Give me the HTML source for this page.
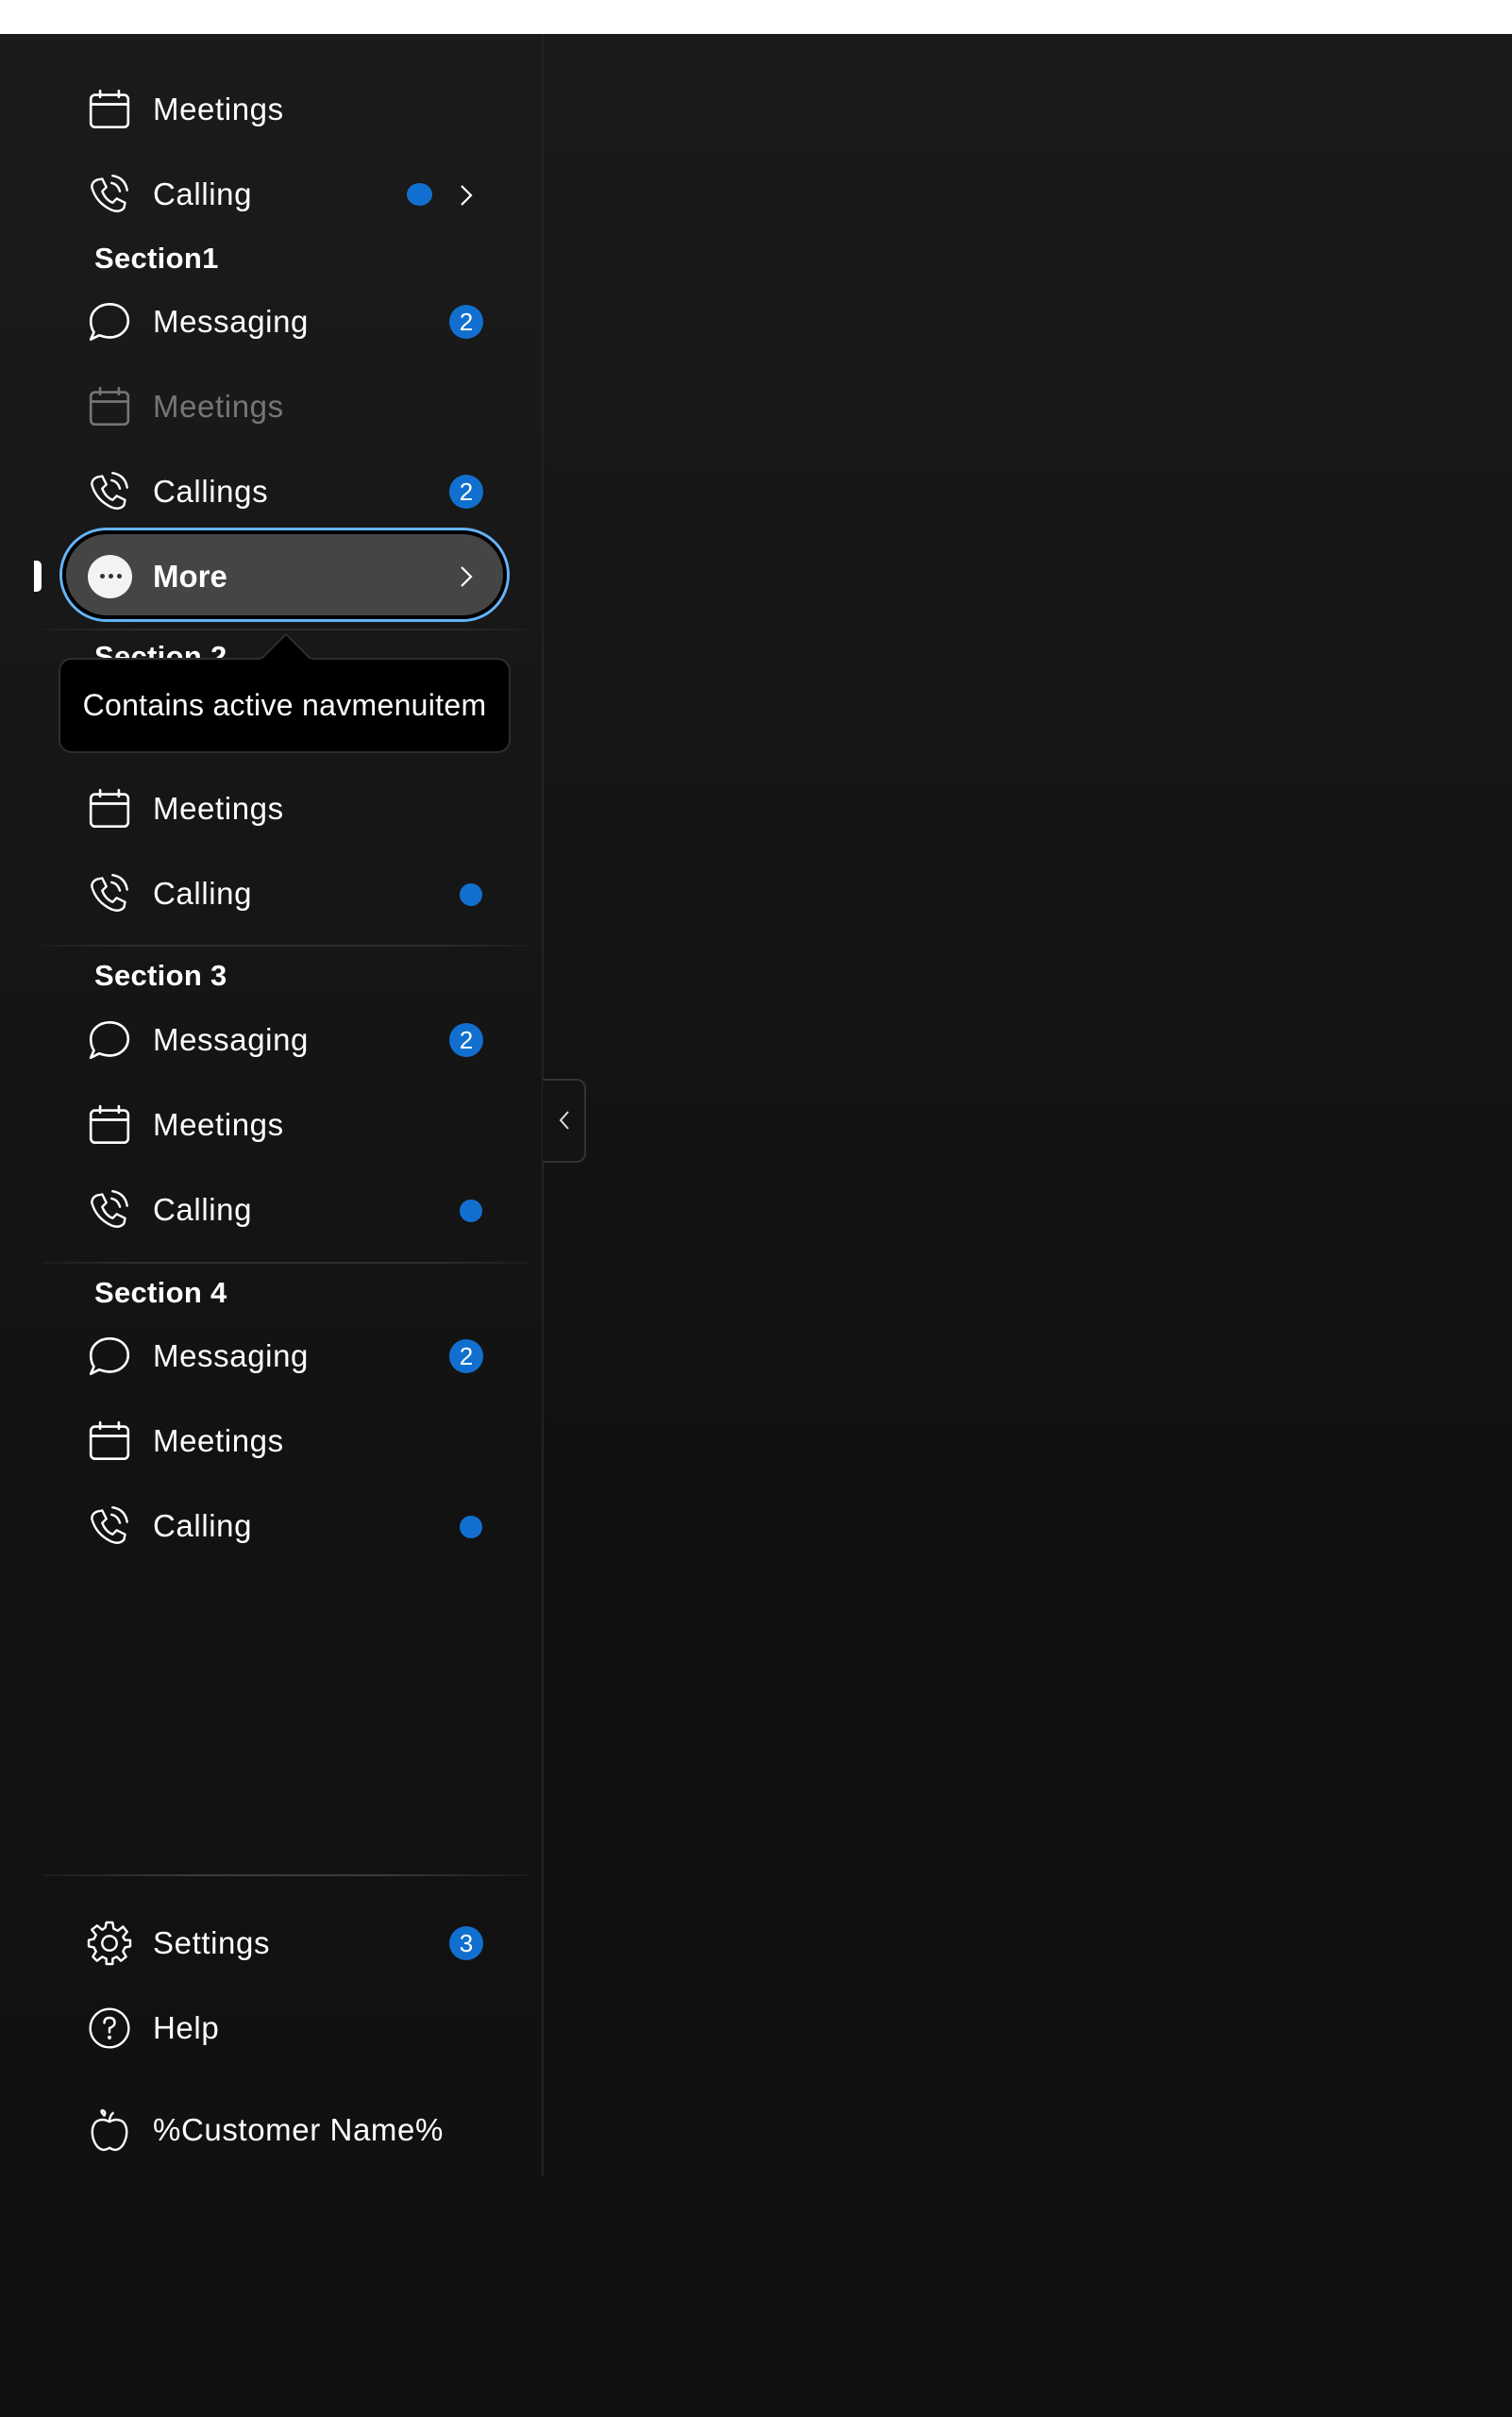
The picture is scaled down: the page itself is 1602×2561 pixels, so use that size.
<!DOCTYPE html>
<html><head><meta charset="utf-8">
<style>
html,body{margin:0;padding:0;}
body{width:1602px;height:2561px;position:relative;overflow:hidden;background:#121212;font-family:"Liberation Sans",sans-serif;color:#fff;}
.top{position:absolute;left:0;top:0;width:1602px;height:36px;background:#fff;}
.main{position:absolute;left:0;top:36px;width:1602px;height:2525px;background:linear-gradient(#1a1a1a,#111 60%,#101010);}
.side{position:absolute;left:0;top:36px;width:574px;height:2270px;background:linear-gradient(#1b1b1b,#121212 70%,#111);border-right:2px solid #232323;}
.row{position:absolute;left:0;width:574px;height:60px;}
.ic{position:absolute;left:94px;top:8px;width:44px;height:44px;}
.tx{position:absolute;left:162px;top:0;line-height:60px;font-size:33px;letter-spacing:0.6px;}
.sec{position:absolute;left:100px;font-size:31px;font-weight:bold;line-height:40px;letter-spacing:0.3px;}
.badge{position:absolute;left:476px;top:12px;width:36px;height:36px;border-radius:50%;background:#1170cf;font-size:26px;line-height:36px;text-align:center;}
.dot{position:absolute;left:487px;top:19px;width:24px;height:24px;border-radius:50%;background:#1170cf;}
.div{position:absolute;left:45px;width:515px;height:2px;background:linear-gradient(90deg,#1c1c1c,#2e2e2e 20%,#2e2e2e 80%,#1c1c1c);}
svg{overflow:visible}
</style></head><body>
<div class="top"></div>
<div class="main"></div>
<div class="side"></div>

<svg width="0" height="0" style="position:absolute">
<defs>
<g id="cal" fill="none" stroke="#fff" stroke-width="2.4" stroke-linecap="round"><rect x="2" y="6" width="36" height="31" rx="4"/><line x1="2" y1="15" x2="38" y2="15"/><line x1="11" y1="2" x2="11" y2="8"/><line x1="29" y1="2" x2="29" y2="8"/></g>
<g id="ph" fill="none" stroke="#fff" stroke-width="2.2" stroke-linecap="round" stroke-linejoin="round"><path d="M8 6 L13 5 L17 13 L13 17 Q16 25 23 28 L27 24 L35 28 L34 33 Q30 38 22 35 Q7 28 3 13 Q3 8 8 6Z"/><path d="M22 9 Q28 10 30 17"/><path d="M23 2 Q35 4 37 16"/></g>
<g id="msg" fill="none" stroke="#fff" stroke-width="2.4" stroke-linejoin="round"><path d="M20 3 C31 3 38 10 38 19 C38 28 30 35 20 35 C16 35 13 34 10 33 L2 37 L5 30 C3 27 2 23 2 19 C2 10 10 3 20 3Z"/></g>
</defs></svg>

<div class="row" style="top:86px"><svg class="ic" viewBox="0 0 40 40"><use href="#cal"/></svg><div class="tx">Meetings</div></div>
<div class="row" style="top:176px"><svg class="ic" viewBox="0 0 40 40"><use href="#ph"/></svg><div class="tx">Calling</div><div class="dot" style="left:431px;top:18px;width:27px;height:24px"></div>
<svg style="position:absolute;left:486px;top:19px" width="16" height="24" viewBox="0 0 16 24"><path d="M3 2 L13 12 L3 22" fill="none" stroke="#fff" stroke-width="2.2"/></svg></div>
<div class="sec" style="top:254px">Section1</div>
<div class="row" style="top:311px"><svg class="ic" viewBox="0 0 40 40"><use href="#msg"/></svg><div class="tx">Messaging</div><div class="badge">2</div></div>
<div class="row" style="top:401px;opacity:0.4"><svg class="ic" viewBox="0 0 40 40"><use href="#cal"/></svg><div class="tx">Meetings</div></div>
<div class="row" style="top:491px"><svg class="ic" viewBox="0 0 40 40"><use href="#ph"/></svg><div class="tx">Callings</div><div class="badge">2</div></div>

<div style="position:absolute;left:36px;top:594px;width:8px;height:33px;background:#fff;border-radius:0 5px 5px 0"></div>
<div style="position:absolute;left:63px;top:559px;width:477px;height:100px;border-radius:50px;border:3px solid #64b4fa;box-sizing:border-box;"></div>
<div style="position:absolute;left:66px;top:562px;width:471px;height:94px;border-radius:47px;border:4px solid #000;box-sizing:border-box;background:#454545"></div>
<div style="position:absolute;left:93px;top:588px;width:47px;height:46px;border-radius:50%;background:#f3f3f3"></div>
<div style="position:absolute;left:106px;top:608px;width:5px;height:5px;border-radius:50%;background:#333;box-shadow:9px 0 #333,18px 0 #333"></div>
<div style="position:absolute;left:162px;top:581px;font-size:33px;font-weight:bold;line-height:60px">More</div>
<svg style="position:absolute;left:486px;top:599px" width="16" height="24" viewBox="0 0 16 24"><path d="M3 2 L13 12 L3 22" fill="none" stroke="#fff" stroke-width="2.2"/></svg>

<div class="div" style="top:666px"></div>
<div class="sec" style="top:676px">Section 2</div>
<div style="position:absolute;left:62px;top:697px;width:479px;height:101px;background:#000;border:2px solid #2e2e2e;border-radius:14px;box-sizing:border-box"></div>
<svg style="position:absolute;left:276px;top:670px" width="54" height="30" viewBox="0 0 54 30"><path d="M0 29 L27 2 L54 29" fill="#000" stroke="#2e2e2e" stroke-width="2"/><rect x="0" y="28" width="54" height="4" fill="#000"/></svg>
<div style="position:absolute;left:62px;top:697px;width:479px;line-height:101px;text-align:center;font-size:32px;letter-spacing:0.3px">Contains active navmenuitem</div>

<div class="row" style="top:827px"><svg class="ic" viewBox="0 0 40 40"><use href="#cal"/></svg><div class="tx">Meetings</div></div>
<div class="row" style="top:917px"><svg class="ic" viewBox="0 0 40 40"><use href="#ph"/></svg><div class="tx">Calling</div><div class="dot"></div></div>
<div class="div" style="top:1001px"></div>
<div class="sec" style="top:1014px">Section 3</div>
<div class="row" style="top:1072px"><svg class="ic" viewBox="0 0 40 40"><use href="#msg"/></svg><div class="tx">Messaging</div><div class="badge">2</div></div>
<div class="row" style="top:1162px"><svg class="ic" viewBox="0 0 40 40"><use href="#cal"/></svg><div class="tx">Meetings</div></div>
<div class="row" style="top:1252px"><svg class="ic" viewBox="0 0 40 40"><use href="#ph"/></svg><div class="tx">Calling</div><div class="dot"></div></div>
<div class="div" style="top:1337px"></div>
<div class="sec" style="top:1350px">Section 4</div>
<div class="row" style="top:1407px"><svg class="ic" viewBox="0 0 40 40"><use href="#msg"/></svg><div class="tx">Messaging</div><div class="badge">2</div></div>
<div class="row" style="top:1497px"><svg class="ic" viewBox="0 0 40 40"><use href="#cal"/></svg><div class="tx">Meetings</div></div>
<div class="row" style="top:1587px"><svg class="ic" viewBox="0 0 40 40"><use href="#ph"/></svg><div class="tx">Calling</div><div class="dot"></div></div>

<div style="position:absolute;left:575px;top:1143px;width:46px;height:89px;background:#141414;border:2px solid #333;border-left:none;border-radius:0 10px 10px 0;box-sizing:border-box"></div>
<svg style="position:absolute;left:591px;top:1176px" width="14" height="22" viewBox="0 0 14 22"><path d="M11 2 L3 11 L11 20" fill="none" stroke="#ddd" stroke-width="2"/></svg>

<div class="div" style="top:1986px;background:linear-gradient(90deg,#1a1a1a,#3a3a3a 30%,#3a3a3a 70%,#1a1a1a)"></div>
<div class="row" style="top:2029px"><svg class="ic" viewBox="0 0 40 40"><g fill="none" stroke="#fff" stroke-width="2.2" stroke-linejoin="round"><path d="M17 1 H23 L24 7 L28 9 L33 5 L37 10 L33 15 L35 18 H40 V24 L35 25 L33 29 L36 34 L31 38 L27 34 L23 36 V41 H17 V36 L13 34 L8 38 L4 34 L7 29 L5 25 L0 24 V18 L5 17 L7 13 L3 8 L8 4 L13 8 L16 6Z" transform="translate(0,-1)"/><circle cx="20" cy="20" r="7"/></g></svg><div class="tx">Settings</div><div class="badge">3</div></div>
<div class="row" style="top:2119px"><svg class="ic" viewBox="0 0 40 40"><g fill="none" stroke="#fff" stroke-width="2.2" stroke-linecap="round"><circle cx="20" cy="20" r="18.5"/><path d="M15 15 Q15 10 20 10 Q25 10 25 15 Q25 18 20 20 V24"/></g><circle cx="20" cy="29" r="1.8" fill="#fff"/></svg><div class="tx">Help</div></div>
<div class="row" style="top:2227px"><svg class="ic" viewBox="0 0 40 40"><g fill="none" stroke="#fff" stroke-width="2.2" stroke-linejoin="round"><path d="M20 12 Q13 8 7 12 Q2 17 4 27 Q7 38 14 39 Q17 39 20 37 Q23 39 26 39 Q33 38 36 27 Q38 17 33 12 Q27 8 20 12Z"/><path d="M20 12 Q20 6 24 3"/><path d="M17 5 Q13 1 15 0 Q19 1 17 5Z" transform="translate(-2,1)"/></g></svg><div class="tx">%Customer Name%</div></div>
</body></html>
